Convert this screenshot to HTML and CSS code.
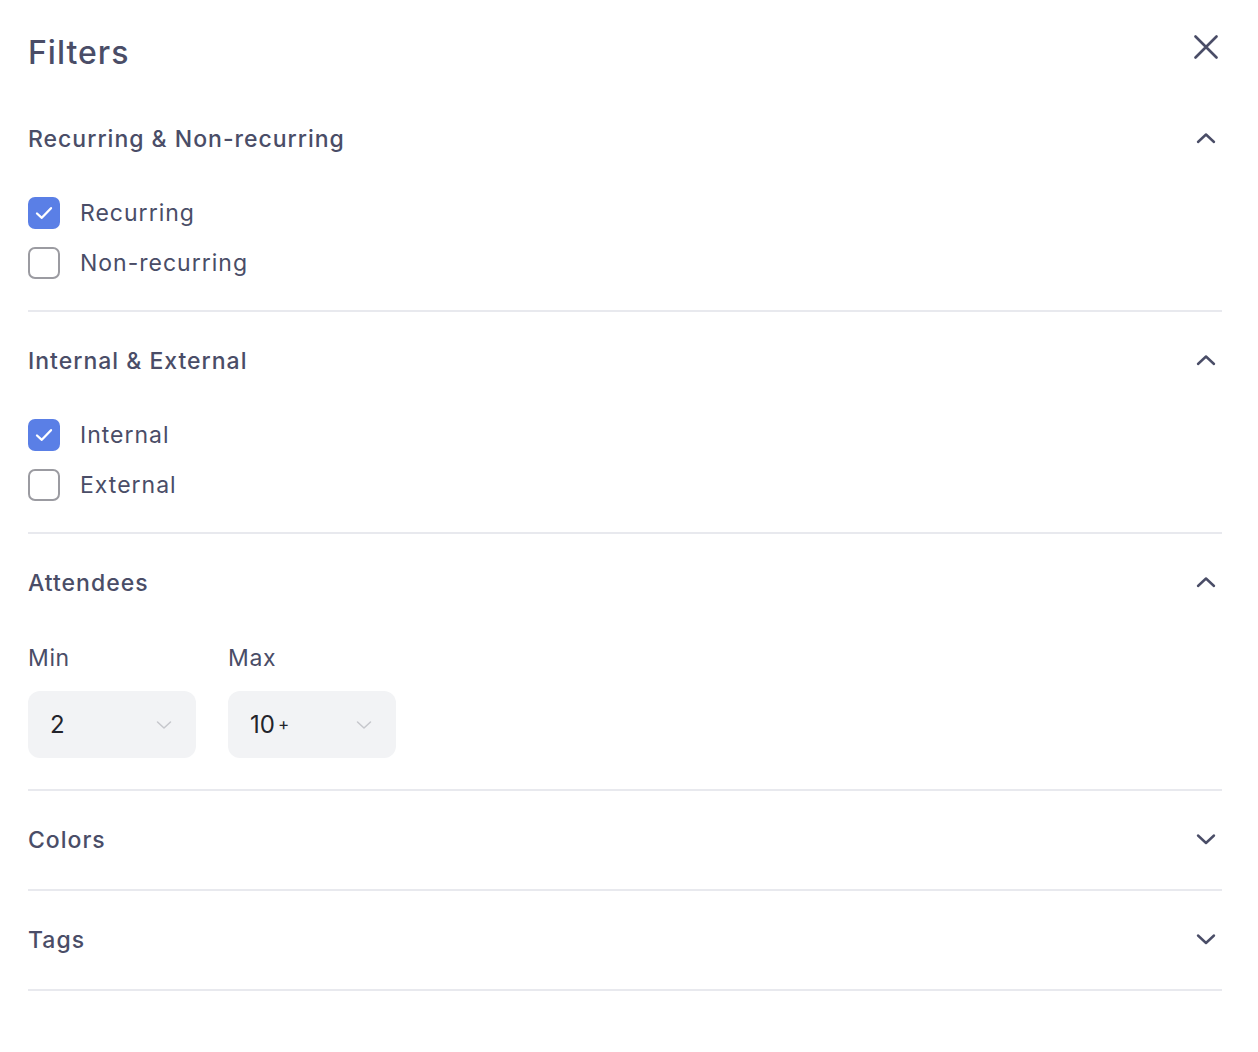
FILE: index.html
```html
<!DOCTYPE html>
<html lang="en">

<head>
    <meta charset="UTF-8">
    <meta name="viewport" content="width=device-width, initial-scale=1.0">
    <title>Filters</title>
    <link rel="stylesheet" href="styles.css">
</head>

<body>
    <div class="filters-panel">
        <div class="filters-panel-head">
            <h1 class="filters-panel-title">Filters</h1>
            <button class="icon-btn" aria-label="Close">
                <svg width="24" height="24" viewBox="0 0 24 24" fill="none" stroke="currentColor" stroke-width="2.6"
                    stroke-linecap="round">
                    <path d="M1.5 1.5L22.5 22.5M22.5 1.5L1.5 22.5" />
                </svg>
            </button>
        </div>

        <div class="filter-section open">
            <div class="filter-section-head">
                <span>Recurring &amp; Non-recurring</span>
                <svg class="chevron" width="24" height="24" viewBox="0 0 24 24" fill="none" stroke="currentColor"
                    stroke-width="2.4" stroke-linecap="round" stroke-linejoin="round">
                    <path d="M4 16L12 8.5L20 16" />
                </svg>
            </div>
            <div class="filter-section-body">
                <label class="check-row">
                    <span class="check-box checked">
                        <svg width="22" height="22" viewBox="0 0 22 22" fill="none" stroke="#fff" stroke-width="2.3"
                            stroke-linecap="round" stroke-linejoin="round">
                            <path d="M4 11.5L8.8 15.8L18 6.2" />
                        </svg>
                    </span>
                    Recurring
                </label>
                <label class="check-row">
                    <span class="check-box"></span>
                    Non-recurring
                </label>
            </div>
        </div>

        <div class="filter-section open">
            <div class="filter-section-head">
                <span>Internal &amp; External</span>
                <svg class="chevron" width="24" height="24" viewBox="0 0 24 24" fill="none" stroke="currentColor"
                    stroke-width="2.4" stroke-linecap="round" stroke-linejoin="round">
                    <path d="M4 16L12 8.5L20 16" />
                </svg>
            </div>
            <div class="filter-section-body">
                <label class="check-row">
                    <span class="check-box checked">
                        <svg width="22" height="22" viewBox="0 0 22 22" fill="none" stroke="#fff" stroke-width="2.3"
                            stroke-linecap="round" stroke-linejoin="round">
                            <path d="M4 11.5L8.8 15.8L18 6.2" />
                        </svg>
                    </span>
                    Internal
                </label>
                <label class="check-row">
                    <span class="check-box"></span>
                    External
                </label>
            </div>
        </div>

        <div class="filter-section open">
            <div class="filter-section-head">
                <span>Attendees</span>
                <svg class="chevron" width="24" height="24" viewBox="0 0 24 24" fill="none" stroke="currentColor"
                    stroke-width="2.4" stroke-linecap="round" stroke-linejoin="round">
                    <path d="M4 16L12 8.5L20 16" />
                </svg>
            </div>
            <div class="filter-section-body range-row">
                <div class="range-field">
                    <div class="range-label">Min</div>
                    <div class="select-box">
                        <span>2</span>
                        <svg width="20" height="20" viewBox="0 0 20 20" fill="none" stroke="currentColor"
                            stroke-width="1.5" stroke-linecap="round" stroke-linejoin="round">
                            <path d="M3.5 7L10 13L16.5 7" />
                        </svg>
                    </div>
                </div>
                <div class="range-field">
                    <div class="range-label">Max</div>
                    <div class="select-box">
                        <span>10<small>+</small></span>
                        <svg width="20" height="20" viewBox="0 0 20 20" fill="none" stroke="currentColor"
                            stroke-width="1.5" stroke-linecap="round" stroke-linejoin="round">
                            <path d="M3.5 7L10 13L16.5 7" />
                        </svg>
                    </div>
                </div>
            </div>
        </div>

        <div class="filter-section">
            <div class="filter-section-head">
                <span>Colors</span>
                <svg class="chevron" width="24" height="24" viewBox="0 0 24 24" fill="none" stroke="currentColor"
                    stroke-width="2.4" stroke-linecap="round" stroke-linejoin="round">
                    <path d="M4 8.5L12 16L20 8.5" />
                </svg>
            </div>
        </div>

        <div class="filter-section">
            <div class="filter-section-head">
                <span>Tags</span>
                <svg class="chevron" width="24" height="24" viewBox="0 0 24 24" fill="none" stroke="currentColor"
                    stroke-width="2.4" stroke-linecap="round" stroke-linejoin="round">
                    <path d="M4 8.5L12 16L20 8.5" />
                </svg>
            </div>
        </div>
    </div>
</body>

</html>
```

FILE: styles.css
```css
body {
    margin: 0;
    background: #fff;
    font-family: Inter, "Noto Sans", sans-serif;
    color: #4a4d67;
}

.filters-panel {
    padding: 32px 36px 0 28px;
}

.filters-panel-head {
    display: flex;
    justify-content: space-between;
    align-items: center;
    height: 40px;
    margin-bottom: 18px;
}

.filters-panel-title {
    margin: 0;
    font-size: 32px;
    font-weight: 500;
    letter-spacing: 1px;
}

.icon-btn {
    border: 0;
    padding: 0;
    margin-right: 4px;
    margin-top: -10px;
    background: none;
    color: #4a4d67;
    display: flex;
}

.filter-section {
    padding: 29px 0 29px;
    border-bottom: 2px solid #e8e9ee;
}

.filter-section.open {
    padding-bottom: 31px;
}

.filter-section-head {
    display: flex;
    justify-content: space-between;
    align-items: center;
    height: 40px;
    font-size: 23px;
    font-weight: 500;
    letter-spacing: 1px;
}

.chevron {
    margin-right: 4px;
    margin-top: -2px;
}

.filter-section-body {
    margin-top: 38px;
    display: flex;
    flex-direction: column;
    gap: 18px;
}

.check-row {
    display: flex;
    align-items: center;
    gap: 20px;
    height: 32px;
    font-size: 23px;
    letter-spacing: 1px;
}

.check-box {
    width: 32px;
    height: 32px;
    box-sizing: border-box;
    border: 2px solid #9b9ba1;
    border-radius: 7px;
    display: flex;
    align-items: center;
    justify-content: center;
}

.check-box.checked {
    border: 0;
    background: #5a7fe6;
}

.range-row {
    margin-top: 41px;
    flex-direction: row;
    gap: 32px;
}

.range-field {
    display: flex;
    flex-direction: column;
    gap: 19px;
}

.range-label {
    font-size: 23px;
    height: 28px;
    line-height: 28px;
    letter-spacing: 0.6px;
}

.select-box {
    width: 168px;
    height: 67px;
    box-sizing: border-box;
    padding: 0 22px 0 22px;
    border-radius: 12px;
    background: #f2f3f5;
    display: flex;
    align-items: center;
    justify-content: space-between;
    color: #c6c7cc;
}

.select-box span {
    font-size: 24px;
    color: #23242b;
    display: flex;
    align-items: center;
}

.select-box small {
    font-size: 17px;
    margin-left: 3px;
    margin-top: -2px;
}
```
